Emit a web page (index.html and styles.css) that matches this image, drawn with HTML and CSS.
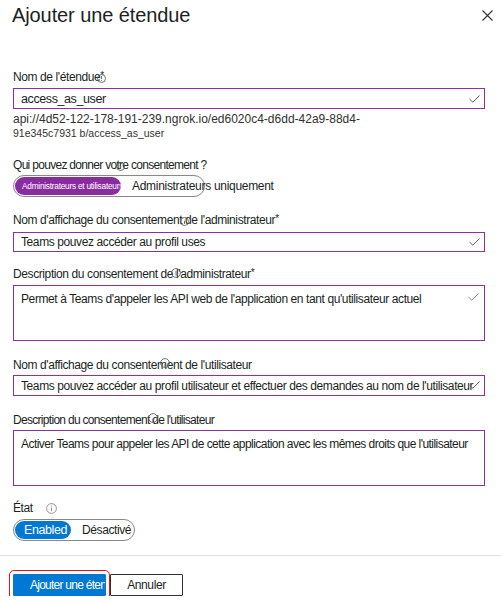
FILE: index.html
```html
<!DOCTYPE html>
<html lang="fr">
<head>
<meta charset="utf-8">
<title>Ajouter une étendue</title>
<link rel="stylesheet" href="styles.css">
</head>
<body>
<div class="panel">
  <div class="header">
    <h1 class="title">Ajouter une étendue</h1>
    <svg class="close" width="11" height="11" viewBox="0 0 11 11"><path d="M0.5 0.5 L10.5 10.5 M10.5 0.5 L0.5 10.5" stroke="#323130" stroke-width="1.1" fill="none"/></svg>
  </div>

  <div class="label l1">Nom de l'étendue<span class="req">*</span>
    <svg class="info" style="left:84px;top:5px" width="9" height="9" viewBox="0 0 9 9"><circle cx="4.5" cy="4.5" r="4" fill="none" stroke="#605e5c" stroke-width="0.9"/><path d="M4.5 2 V5.2 M4.5 6.2 V7" stroke="#605e5c" stroke-width="0.9"/></svg>
  </div>
  <div class="input in1"><span class="val">access_as_user</span><svg class="check" width="11" height="8" viewBox="0 0 11 8"><path d="M0.5 4 L3.8 7.2 L10.5 0.5" fill="none" stroke="#605e5c" stroke-width="1"/></svg></div>
  <div class="uri1">api://4d52-122-178-191-239.ngrok.io/ed6020c4-d6dd-42a9-88d4-</div>
  <div class="uri2">91e345c7931 b/access_as_user</div>

  <div class="label l2 tight">Qui pouvez donner votre consentement ?
    <svg class="info" style="left:103px;top:5px" width="9" height="9" viewBox="0 0 9 9"><circle cx="4.5" cy="4.5" r="4" fill="none" stroke="#605e5c" stroke-width="0.9"/><path d="M4.5 3.8 V7" stroke="#605e5c" stroke-width="0.9"/></svg>
  </div>
  <div class="pill pill-who">
    <span class="seg seg-purple">Administrateurs et utilisateurs</span>
    <span class="opt opt-who">Administrateurs uniquement</span>
  </div>

  <div class="label l3">Nom d'affichage du consentement de l'administrateur<span class="req">*</span>
    <svg class="info" style="left:167px;top:5px" width="9" height="9" viewBox="0 0 9 9"><circle cx="4.5" cy="4.5" r="4" fill="none" stroke="#605e5c" stroke-width="0.9"/><path d="M4.5 3.8 V7" stroke="#605e5c" stroke-width="0.9"/></svg>
  </div>
  <div class="input in2"><span class="val">Teams pouvez accéder au profil uses</span><svg class="check" width="11" height="8" viewBox="0 0 11 8"><path d="M0.5 4 L3.8 7.2 L10.5 0.5" fill="none" stroke="#605e5c" stroke-width="1"/></svg></div>

  <div class="label l4">Description du consentement de l'administrateur<span class="req">*</span>
    <svg class="info" style="left:158px;top:2px" width="10" height="10" viewBox="0 0 10 10"><circle cx="5" cy="5" r="4.4" fill="none" stroke="#605e5c" stroke-width="0.9"/><path d="M5 3 V7.5" stroke="#605e5c" stroke-width="0.9"/></svg>
  </div>
  <div class="area ta1"><span class="val">Permet à Teams d'appeler les API web de l'application en tant qu'utilisateur actuel</span><svg class="check" width="11" height="8" viewBox="0 0 11 8"><path d="M0.5 4 L3.8 7.2 L10.5 0.5" fill="none" stroke="#8a8886" stroke-width="1"/></svg></div>

  <div class="label l5">Nom d'affichage du consentement de l'utilisateur
    <svg class="info" style="left:147px;top:1px" width="10" height="10" viewBox="0 0 10 10"><circle cx="5" cy="5" r="4.4" fill="none" stroke="#605e5c" stroke-width="0.9"/><path d="M5 6 V9" stroke="#605e5c" stroke-width="0.9"/></svg>
  </div>
  <div class="input in3"><span class="val">Teams pouvez accéder au profil utilisateur et effectuer des demandes au nom de l'utilisateur</span><svg class="check" width="11" height="8" viewBox="0 0 11 8"><path d="M0.5 4 L3.8 7.2 L10.5 0.5" fill="none" stroke="#605e5c" stroke-width="1"/></svg></div>

  <div class="label l6 tight">Description du consentement de l'utilisateur
    <svg class="info" style="left:135px;top:1px" width="10" height="10" viewBox="0 0 10 10"><circle cx="5" cy="5" r="4.4" fill="none" stroke="#605e5c" stroke-width="0.9"/><path d="M5 5.5 V9" stroke="#605e5c" stroke-width="0.9"/></svg>
  </div>
  <div class="area ta2"><span class="val narrow">Activer Teams pour appeler les API de cette application avec les mêmes droits que l'utilisateur</span></div>

  <div class="label l7">État
    <svg class="info" style="left:33px;top:3px" width="11" height="11" viewBox="0 0 11 11"><circle cx="5.5" cy="5.5" r="4.9" fill="none" stroke="#8a8886" stroke-width="0.9"/><path d="M5.5 4.6 V8.2" stroke="#8a8886" stroke-width="0.9"/><circle cx="5.5" cy="3.1" r="0.6" fill="#8a8886"/></svg>
  </div>
  <div class="pill pill-state">
    <span class="seg seg-blue">Enabled</span>
    <span class="opt opt-state">Désactivé</span>
  </div>
</div>

<div class="separator"></div>

<div class="footer">
  <button class="btn btn-primary">Ajouter une éten</button>
  <button class="btn btn-secondary">Annuler</button>
</div>
</body>
</html>
```

FILE: styles.css
```css
html, body {
  margin: 0;
  padding: 0;
  background: #ffffff;
}
body {
  font-family: "Liberation Sans", Arial, sans-serif;
  color: #323130;
  font-size: 12px;
  letter-spacing: -0.4px;
}
.panel {
  padding: 0 16px 0 13px;
}
.header {
  display: flex;
  justify-content: space-between;
  align-items: flex-start;
  padding-top: 2px;
  height: 26px;
}
.title {
  margin: 0 0 0 -1px;
  font-weight: normal;
  font-size: 20px;
  line-height: 26px;
  letter-spacing: -0.1px;
  color: #201f1e;
}
.close {
  margin-top: 8px;
  margin-right: -8px;
}
.label {
  position: relative;
  line-height: 16px;
  height: 16px;
  white-space: nowrap;
  color: #201f1e;
}
.tight {
  letter-spacing: -0.7px;
}
.req {
  font-size: 10px;
  line-height: 0;
  position: relative;
  top: -2px;
}
.info {
  position: absolute;
  display: block;
}
.l1 { margin-top: 41px; }
.l2 { margin-top: 17px; }
.l3 { margin-top: 15px; }
.l4 { margin-top: 14px; }
.l5 { margin-top: 16px; }
.l6 { margin-top: 16px; }
.l7 { margin-top: 14px; }

.input, .area {
  box-sizing: border-box;
  border: 1px solid #8a32a3;
  display: flex;
  justify-content: space-between;
  padding: 0 4px 0 7px;
  color: #201f1e;
  position: relative;
}
.input {
  align-items: center;
}
.area {
  align-items: flex-start;
  padding-top: 5px;
  line-height: 16px;
}
.val {
  white-space: nowrap;
  overflow: hidden;
  flex: 1 1 auto;
  min-width: 0;
}
.check {
  flex: 0 0 auto;
  margin-left: 2px;
}
.in1 { margin-top: 3px; height: 21px; }
.in1 .val { font-size: 12.5px; }
.in2 { margin-top: 4px; height: 20px; }
.in3 { margin-top: 2px; height: 21px; }
.in3 .check { margin-left: -8px; margin-top: -2px; }
.ta1 { margin-top: 3px; height: 56px; }
.ta1 .check { margin-top: 2px; margin-right: 1px; }
.ta2 { margin-top: 2px; height: 56px; }
.narrow { letter-spacing: -0.55px; }

.uri1 {
  margin-top: 3px;
  font-size: 12px;
  line-height: 14px;
  letter-spacing: 0;
  color: #323130;
}
.uri2 {
  margin-top: 1px;
  font-size: 10.5px;
  line-height: 13px;
  letter-spacing: 0;
  color: #323130;
}

.pill {
  box-sizing: border-box;
  display: flex;
  align-items: center;
  height: 22px;
  border: 1px solid #8a8886;
  border-radius: 11px;
  padding: 1px;
  white-space: nowrap;
}
.pill-who { margin-top: 2px; width: 192px; }
.pill-state { margin-top: 3px; width: 122px; }
.seg {
  box-sizing: border-box;
  height: 18px;
  border-radius: 9px;
  color: #ffffff;
  display: flex;
  align-items: center;
  overflow: hidden;
  flex: 0 0 auto;
}
.seg-purple {
  background: #8a2ca0;
  width: 106px;
  font-size: 8.3px;
  letter-spacing: -0.25px;
  padding-left: 7px;
}
.seg-blue {
  background: #0078d4;
  width: 56px;
  padding-left: 9px;
  font-size: 12.5px;
}
.opt {
  color: #201f1e;
}
.opt-who { margin-left: 11px; font-size: 12px; letter-spacing: -0.3px; }
.opt-state { margin-left: 11px; }

.separator {
  margin-top: 14px;
  height: 1px;
  background: #e1dfdd;
}
.footer {
  display: flex;
  gap: 4px;
  padding: 18px 0 0 13px;
}
.btn {
  box-sizing: border-box;
  height: 22px;
  font-family: "Liberation Sans", Arial, sans-serif;
  font-size: 12px;
  letter-spacing: -0.4px;
  border-radius: 1px;
  white-space: nowrap;
  overflow: hidden;
  margin: 0;
}
.btn-primary {
  width: 93px;
  background: #0078d4;
  color: #ffffff;
  border: 1px solid #0078d4;
  text-align: left;
  padding: 0 0 0 16px;
  letter-spacing: -0.75px;
  outline: 1px solid #e81123;
  outline-offset: 3px;
}
.btn-secondary {
  width: 73px;
  background: #ffffff;
  color: #201f1e;
  border: 1px solid #323130;
  padding: 0;
  text-align: center;
}
```
